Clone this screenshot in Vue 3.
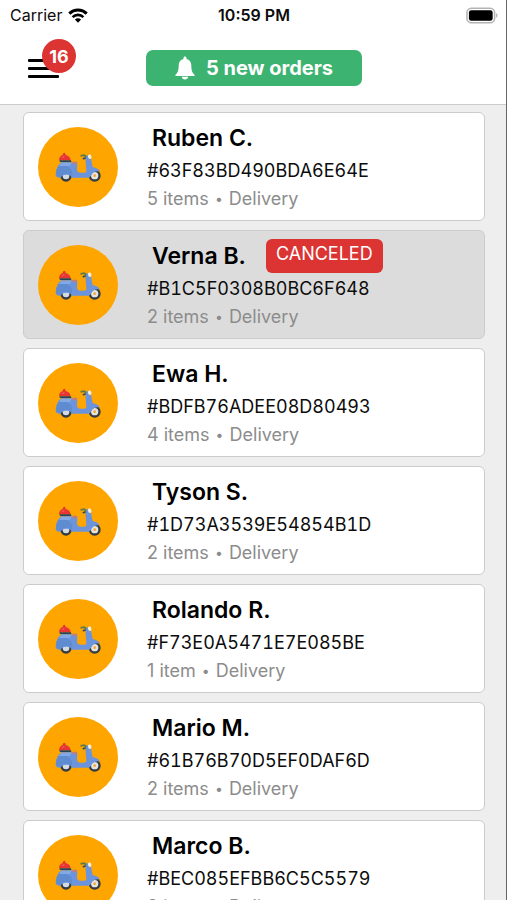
<script setup>
const orders = [
  { name: 'Ruben C.', id: '63F83BD490BDA6E64E', items: '5 items' },
  { name: 'Verna B.', id: 'B1C5F0308B0BC6F648', items: '2 items', canceled: true },
  { name: 'Ewa H.', id: 'BDFB76ADEE08D80493', items: '4 items' },
  { name: 'Tyson S.', id: '1D73A3539E54854B1D', items: '2 items' },
  { name: 'Rolando R.', id: 'F73E0A5471E7E085BE', items: '1 item' },
  { name: 'Mario M.', id: '61B76B70D5EF0DAF6D', items: '2 items' },
  { name: 'Marco B.', id: 'BEC085EFBB6C5C5579', items: '3 items' },
]
</script>

<template>
  <div class="screen">
    <header class="top">
      <div class="status">
        <div class="carrier">
          <span>Carrier</span>
          <svg class="wifi" viewBox="0 0 20 15" aria-hidden="true">
            <path d="M1.3 5.6a12.6 12.6 0 0 1 17.4 0" fill="none" stroke="#000" stroke-width="3" />
            <path d="M4.6 9.1a7.8 7.8 0 0 1 10.8 0" fill="none" stroke="#000" stroke-width="2.7" />
            <path d="M10 14.8 6.9 11.6a4.5 4.5 0 0 1 6.2 0z" />
          </svg>
        </div>
        <div class="time">10:59 PM</div>
        <svg class="battery" viewBox="0 0 33 17" aria-hidden="true">
          <rect x="1" y="1" width="28.5" height="15" rx="4.5" fill="#fff" stroke="#b4b4b4" stroke-width="1.6" />
          <rect x="3" y="3" width="24.5" height="11" rx="2.5" />
          <path d="M31 6.3c2 .7 2 3.700 0 4.400z" fill="#b4b4b4" />
        </svg>
      </div>
      <div class="bar">
        <button class="menu" type="button" aria-label="Menu">
          <span class="line"></span>
          <span class="line"></span>
          <span class="line"></span>
          <span class="count">16</span>
        </button>
        <button class="new-orders" type="button">
          <svg class="bell" viewBox="0 0 20 24" aria-hidden="true">
            <path d="M10 .5c1 0 1.500.7 1.500 1.700v.7c3 .7 4.800 3.100 4.800 6.300 0 5.500 1.200 7.800 3 9.200.7.600.3 1.600-.6 1.600H1.300c-.9 0-1.300-1-.6-1.600 1.800-1.400 3-3.700 3-9.200 0-3.200 1.800-5.600 4.800-6.300v-.7C8.500 1.200 9 .5 10 .5z" fill="#fff" />
            <path d="M6.800 20.800h6.400c-.2 1.700-1.500 2.800-3.200 2.800s-3-1.100-3.200-2.800z" fill="#fff" />
          </svg>
          <span>5 new orders</span>
        </button>
      </div>
    </header>

    <main class="list">
      <article v-for="order in orders" :key="order.id" class="card" :class="{ muted: order.canceled }">
        <div class="avatar">
          <svg class="scooter" viewBox="0 0 168 144" aria-hidden="true">
            <circle cx="48" cy="99" r="17" fill="#303c46" />
            <circle cx="48" cy="99" r="10" fill="#d4dbe0" />
            <circle cx="134" cy="98" r="18" fill="#303c46" />
            <circle cx="134" cy="98" r="11" fill="#e9e4da" />
            <circle cx="134" cy="98" r="4" fill="#f0a53a" />
            <path d="M34 58h42q7 0 6 6l-1 14q0 10 9 11h12q8 0 7-8L106 45q-1-6 6-8 8-1 10 6l6 29q15 3 22 13-19-3-27 13-3 6-9 6H65q-1-9-16-9-14 0-17 9-16 2-15-11 2-25 17-35z" fill="#6b94dc" />
            <path d="M25 70q22-7 36 6 8 9 4 23-3-7-16-7-14 0-17 9-12 1-14-6 0-15 7-25z" fill="#5f8bd0" />
            <path d="M33 60h31l-4 9H28z" fill="#82a9e6" />
            <path d="M68 57q10-4 14 2l-2 5H66z" fill="#bd7e83" />
            <path d="M27 52q1-13 11-16 1-7 5-7 3 0 4 7 13 3 15 16z" fill="#e73535" />
            <path d="M35 45q2-5 8-6v4z" fill="#f66a5a" />
            <path d="M28 52h35l1 5H30z" fill="#27445f" />
            <path d="m91 36 12-2 7 4-2 5-8-3-8 1z" fill="#637b46" />
            <path d="m97 46 9-4 3 4-9 4z" fill="#38513f" />
            <ellipse cx="119" cy="41" rx="5" ry="7" fill="#f3f0e6" transform="rotate(-15 119 41)" />
          </svg>
        </div>
        <div class="info">
          <div class="title">
            <h2 class="name">{{ order.name }}</h2>
            <span v-if="order.canceled" class="tag">CANCELED</span>
          </div>
          <div class="id">#{{ order.id }}</div>
          <div class="meta">{{ order.items }} <span class="dot">•</span> Delivery</div>
        </div>
      </article>
    </main>
  </div>
</template>

<style>
body {
  background: #eee;
}
</style>

<style scoped>
.screen {
  box-sizing: border-box;
  height: 100vh;
  display: flex;
  flex-direction: column;
  overflow: hidden;
  background: #eee;
  border-right: 1px solid #666;
  color: #0c0c0c;
  font-family: Inter, "Liberation Sans", sans-serif;
}
.top {
  flex: none;
  background: #fff;
  border-bottom: 1px solid #ccc;
}
.status {
  display: grid;
  grid-template-columns: 1fr auto 1fr;
  align-items: center;
  height: 30px;
  padding: 0 8px 0 10px;
  font-size: 16px;
  line-height: 20px;
}
.carrier {
  display: flex;
  align-items: center;
  gap: 6px;
}
.wifi {
  width: 20px;
  height: 15px;
}
.time {
  font-weight: 600;
}
.battery {
  width: 32px;
  height: 17px;
  justify-self: end;
}
.bar {
  display: grid;
  grid-template-columns: 1fr auto 1fr;
  align-items: center;
  box-sizing: border-box;
  height: 74px;
  padding: 2px 26px 0 28px;
}
.menu {
  position: relative;
  display: flex;
  flex-direction: column;
  gap: 5px;
  width: 31px;
  padding: 0;
  border: 0;
  background: none;
  font: inherit;
}
.line {
  height: 3px;
  border-radius: 1px;
  background: #000;
}
.count {
  position: absolute;
  left: 14px;
  top: -20px;
  width: 34px;
  height: 34px;
  border-radius: 50%;
  background: #dc3333;
  color: #fff;
  font-size: 18px;
  font-weight: 700;
  line-height: 35px;
  text-align: center;
}
.new-orders {
  display: flex;
  align-items: center;
  justify-content: center;
  gap: 11px;
  width: 216px;
  height: 36px;
  margin: 0;
  padding: 0;
  border: 0;
  border-radius: 7px;
  background: #3cb371;
  color: #fff;
  font: inherit;
  font-size: 20px;
  font-weight: 700;
}
.bell {
  width: 20px;
  height: 24px;
}
.list {
  flex: 1;
  min-height: 0;
  display: flex;
  flex-direction: column;
  gap: 9px;
  padding: 7px 21px 0 23px;
  overflow: hidden;
}
.card {
  flex: none;
  box-sizing: border-box;
  display: flex;
  align-items: center;
  gap: 29px;
  height: 109px;
  padding: 0 14px;
  border: 1px solid #ccc;
  border-radius: 6px;
  background: #fff;
}
.muted {
  background: #dcdcdc;
}
.avatar {
  flex: none;
  display: flex;
  align-items: center;
  justify-content: center;
  width: 80px;
  height: 80px;
  border-radius: 50%;
  background: #ffa500;
}
.scooter {
  width: 56px;
  height: 48px;
}
.title {
  display: flex;
  align-items: flex-start;
  gap: 20px;
  height: 36px;
  padding-left: 5px;
}
.name {
  margin: 0;
  color: #000;
  font-size: 23px;
  font-weight: 600;
  line-height: 34px;
}
.tag {
  box-sizing: border-box;
  height: 34px;
  padding: 0 10px;
  border-radius: 6px;
  background: #dc3333;
  color: #fff;
  font-size: 18px;
  line-height: 30px;
}
.id {
  font-size: 18px;
  font-variant-numeric: tabular-nums;
  line-height: 28px;
}
.meta {
  color: #8c8c8c;
  font-size: 18px;
  line-height: 28px;
}
.dot {
  margin: 0 1px;
  font-size: 14px;
  line-height: 1;
  vertical-align: 1px;
}
</style>
